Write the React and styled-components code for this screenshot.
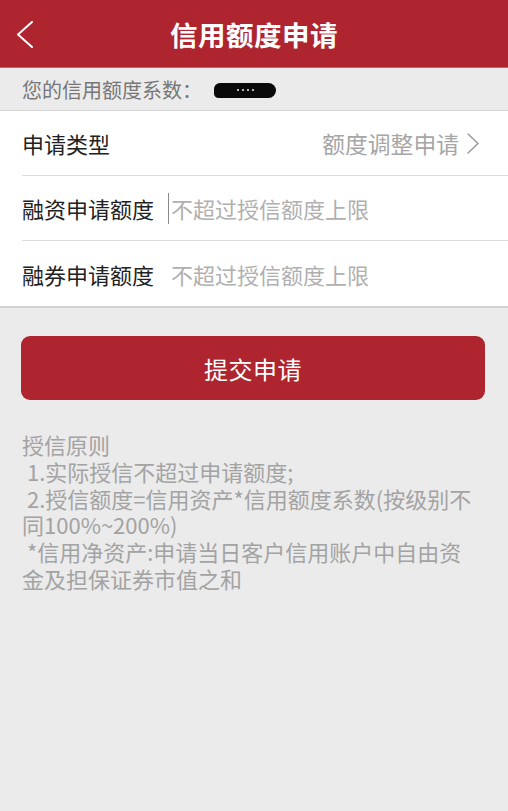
import React from "react";
import styled, { createGlobalStyle } from "styled-components";

const GlobalStyle = createGlobalStyle`
    html, body {
        margin: 0;
        padding: 0;
        background: #ebebeb;
    }
    * {
        box-sizing: border-box;
    }
`;

const RED = "#ae2530";

const Page = styled.div`
    width: 100%;
    min-height: 811px;
    background: #ebebeb;
    font-family: "Noto Sans CJK SC", "Noto Sans", sans-serif;
    display: flex;
    flex-direction: column;
`;

const Header = styled.div`
    height: 68px;
    background: ${RED};
    display: grid;
    grid-template-columns: 70px 1fr 70px;
    align-items: center;
    border-bottom: 1px solid #c9606a;
`;

const Back = styled.div`
    padding-left: 17px;
    padding-top: 2px;
    display: flex;
    align-items: center;
    height: 100%;
`;

const Title = styled.h1`
    margin: 0;
    text-align: center;
    color: #fff;
    font-size: 27.5px;
    font-weight: 700;
    letter-spacing: 0.5px;
`;

const CoefBar = styled.div`
    height: 43px;
    padding-left: 22px;
    display: flex;
    align-items: center;
    color: #777;
    font-size: 20px;
    border-bottom: 1px solid #d4d4d4;
`;

const Redacted = styled.span`
    display: inline-flex;
    align-items: center;
    justify-content: center;
    gap: 3px;
    width: 62px;
    height: 15px;
    margin-left: 12px;
    margin-top: 2px;
    background: #0a0a0a;
    border-radius: 8px 10px 10px 6px;

    & > i {
        width: 2px;
        height: 2px;
        background: #bbb;
    }
`;

const Form = styled.div`
    background: #fff;
    border-bottom: 2px solid #d2d2d2;
`;

const Row = styled.div`
    height: 65px;
    margin-left: 22px;
    padding-right: 29px;
    display: flex;
    align-items: center;
    border-bottom: ${props => (props.$last ? "none" : "1px solid #dadada")};
`;

const Label = styled.span`
    color: #222;
    font-size: 22px;
    white-space: nowrap;
`;

const Value = styled.span`
    margin-left: auto;
    color: #a6a6a6;
    font-size: 22.8px;
    display: flex;
    align-items: center;
    gap: 8px;
`;

const Caret = styled.span`
    width: 1px;
    height: 31px;
    background: #8a8a8a;
    margin-left: 14px;
`;

const Input = styled.input`
    flex: 1;
    min-width: 0;
    margin-left: ${props => (props.$afterCaret ? "2px" : "17px")};
    border: none;
    outline: none;
    padding: 0;
    background: transparent;
    font-family: inherit;
    font-size: 22px;
    color: #222;
    caret-color: transparent;

    &::placeholder {
        color: #b0b0b0;
    }
`;

const Submit = styled.button`
    margin: 28px 23px 0 21px;
    height: 64px;
    border: none;
    border-radius: 9px;
    background: ${RED};
    color: #fff;
    font-family: inherit;
    font-size: 24px;
    letter-spacing: 0.5px;
`;

const Notes = styled.div`
    margin-top: 31px;
    padding: 0 10px 0 22px;
    color: #a3a3a3;
    font-size: 22px;
    line-height: 26.8px;

    & > p {
        margin: 0;
    }
`;

function Chevron({ dir, color, w, h, sw }) {
    const d = dir === "left" ? `M${w - 1} 1 L1 ${h / 2} L${w - 1} ${h - 1}` : `M1 1 L${w - 1} ${h / 2} L1 ${h - 1}`;
    return (
        <svg width={w} height={h} viewBox={`0 0 ${w} ${h}`}>
            <path d={d} fill="none" stroke={color} strokeWidth={sw} strokeLinecap="round" strokeLinejoin="round" />
        </svg>
    );
}

export default function App() {
    return (
        <Page>
            <GlobalStyle />
            <Header>
                <Back>
                    <Chevron dir="left" color="#fff" w={16} h={27} sw={2} />
                </Back>
                <Title>信用额度申请</Title>
                <span />
            </Header>
            <CoefBar>
                您的信用额度系数：
                <Redacted>
                    <i />
                    <i />
                    <i />
                    <i />
                </Redacted>
            </CoefBar>
            <Form>
                <Row>
                    <Label>申请类型</Label>
                    <Value>
                        额度调整申请
                        <Chevron dir="right" color="#9a9a9a" w={12} h={21} sw={1.5} />
                    </Value>
                </Row>
                <Row>
                    <Label>融资申请额度</Label>
                    <Caret />
                    <Input $afterCaret placeholder="不超过授信额度上限" />
                </Row>
                <Row $last>
                    <Label>融券申请额度</Label>
                    <Input placeholder="不超过授信额度上限" />
                </Row>
            </Form>
            <Submit>提交申请</Submit>
            <Notes>
                <p>授信原则</p>
                <p>&nbsp;1.实际授信不超过申请额度;</p>
                <p>&nbsp;2.授信额度=信用资产*信用额度系数(按级别不<br />同100%~200%)</p>
                <p>&nbsp;*信用净资产:申请当日客户信用账户中自由资<br />金及担保证券市值之和</p>
            </Notes>
        </Page>
    );
}
